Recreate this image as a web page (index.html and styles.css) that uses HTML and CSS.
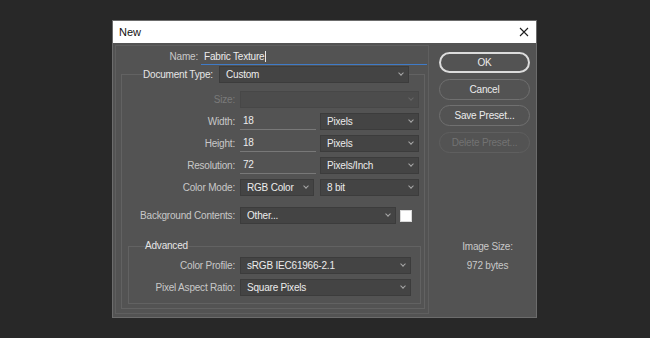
FILE: index.html
```html
<!DOCTYPE html>
<html lang="en">

<head>
    <meta charset="UTF-8">
    <title>New</title>
    <link rel="stylesheet" href="styles.css">
</head>

<body>
    <div class="dialog">
        <div class="titlebar">
            <span class="title">New</span>
            <svg class="close" width="10" height="10" viewBox="0 0 10 10">
                <path d="M1 1L9 9M9 1L1 9" stroke="#1e1e1e" stroke-width="1.1" fill="none" />
            </svg>
        </div>

        <div class="content">
            <div class="panel">
                <div class="name-row">
                    <span class="name-label">Name:</span>
                    <div class="name-input">Fabric Texture<span class="caret"></span></div>
                </div>

                <fieldset class="group">
                    <legend class="group-head">
                        <span class="head-label">Document Type:</span>
                        <div class="select select-doc">Custom</div>
                    </legend>

                    <div class="row">
                        <span class="label disabled">Size:</span>
                        <div class="select select-size is-disabled"></div>
                    </div>
                    <div class="row">
                        <span class="label">Width:</span>
                        <div class="field">18</div>
                        <div class="select select-unit">Pixels</div>
                    </div>
                    <div class="row">
                        <span class="label">Height:</span>
                        <div class="field">18</div>
                        <div class="select select-unit">Pixels</div>
                    </div>
                    <div class="row">
                        <span class="label">Resolution:</span>
                        <div class="field">72</div>
                        <div class="select select-unit">Pixels/Inch</div>
                    </div>
                    <div class="row">
                        <span class="label">Color Mode:</span>
                        <div class="select select-mode">RGB Color</div>
                        <div class="select select-unit">8 bit</div>
                    </div>
                    <div class="row row-bg">
                        <span class="label">Background Contents:</span>
                        <div class="select select-bg">Other...</div>
                        <div class="swatch"></div>
                    </div>

                    <fieldset class="advanced">
                        <legend class="adv-head">Advanced</legend>
                        <div class="row">
                            <span class="label label-adv">Color Profile:</span>
                            <div class="select select-adv">sRGB IEC61966-2.1</div>
                        </div>
                        <div class="row">
                            <span class="label label-adv">Pixel Aspect Ratio:</span>
                            <div class="select select-adv">Square Pixels</div>
                        </div>
                    </fieldset>
                </fieldset>
            </div>

            <div class="side">
                <button class="btn btn-default">OK</button>
                <button class="btn">Cancel</button>
                <button class="btn">Save Preset...</button>
                <button class="btn btn-disabled">Delete Preset...</button>

                <div class="image-size">
                    <p>Image Size:</p>
                    <p>972 bytes</p>
                </div>
            </div>
        </div>
    </div>
</body>

</html>
```

FILE: styles.css
```css
body {
    margin: 0;
    background-color: #282828;
    font-family: "Liberation Sans", Arial, sans-serif;
    font-size: 10px;
    letter-spacing: -0.2px;
}

.dialog {
    width: 425px;
    height: 298px;
    margin: 20px 0 0 112px;
    box-sizing: border-box;
    border: 1px solid #6c6c6c;
    background-color: #535353;
}

.titlebar {
    height: 22px;
    display: flex;
    align-items: center;
    justify-content: space-between;
    padding: 0 7px 0 6px;
    background-color: #fff;
}

.title {
    font-size: 11px;
    letter-spacing: 0;
    color: #111;
}

.content {
    display: flex;
    padding: 2px 0 0 2px;
}

.panel {
    width: 314px;
    height: 269px;
    box-sizing: border-box;
    border: 1px solid #5f5f5f;
    padding-top: 3px;
}

.name-row {
    display: flex;
    height: 17px;
}

.name-label {
    width: 82px;
    text-align: right;
    line-height: 16px;
    color: #c8c8c8;
}

.name-input {
    width: 226px;
    height: 16px;
    margin-left: 3px;
    padding-left: 3px;
    box-sizing: border-box;
    border-bottom: 1px solid #3f7bc8;
    line-height: 15px;
    color: #ececec;
}

.caret {
    display: inline-block;
    width: 1px;
    height: 11px;
    margin-left: 1px;
    vertical-align: -2px;
    background-color: #e8e8e8;
}

.group {
    width: 304px;
    margin: 0 0 0 5px;
    padding: 8px 0 4px 0;
    box-sizing: border-box;
    border: 1px solid #626262;
    min-width: 0;
}

.group-head {
    display: flex;
    align-items: center;
    margin-left: 21px;
    padding: 0;
    white-space: nowrap;
}

.head-label {
    width: 72px;
    color: #e6e6e6;
}

.row {
    display: flex;
    align-items: center;
    height: 17px;
    margin-bottom: 5px;
    white-space: nowrap;
}

.row-bg {
    margin-top: 11px;
    margin-bottom: 0;
}

.label {
    width: 113px;
    margin-right: 5px;
    text-align: right;
    color: #c8c8c8;
}

.label.disabled {
    color: #7a7a7a;
}

.label-adv {
    width: 106px;
}

.select {
    display: flex;
    align-items: center;
    height: 17px;
    padding: 0 4px 0 6px;
    box-sizing: border-box;
    background-color: #444;
    border: 1px solid #3c3c3c;
    color: #ececec;
}

.select::after {
    content: "";
    width: 3px;
    height: 3px;
    margin: -3px 1px 0 auto;
    border-right: 1px solid #a8a8a8;
    border-bottom: 1px solid #a8a8a8;
    transform: rotate(45deg);
}

.select-doc {
    width: 190px;
    margin-left: 4px;
}

.select-size {
    width: 179px;
}

.select.is-disabled {
    background-color: #4c4c4c;
    border-color: #474747;
}

.select.is-disabled::after {
    border-color: #666;
}

.field {
    width: 76px;
    height: 17px;
    margin-right: 4px;
    padding-left: 3px;
    box-sizing: border-box;
    border-bottom: 1px solid #787878;
    line-height: 16px;
    color: #ececec;
}

.select-unit {
    width: 99px;
}

.select-mode {
    width: 74px;
    margin-right: 6px;
}

.select-bg {
    width: 156px;
}

.swatch {
    width: 12px;
    height: 12px;
    margin-left: 4px;
    box-sizing: border-box;
    background-color: #fff;
    border: 1px solid #d8d8d8;
}

.advanced {
    width: 293px;
    margin: 15px 0 0 6px;
    padding: 4px 0 2px 0;
    box-sizing: border-box;
    border: 1px solid #626262;
    min-width: 0;
}

.adv-head {
    margin-left: 16px;
    padding: 0;
    line-height: 14px;
    color: #e6e6e6;
}

.select-adv {
    width: 171px;
}

.side {
    width: 107px;
    padding: 7px 0 0 10px;
    box-sizing: border-box;
    display: flex;
    flex-direction: column;
}

.btn {
    width: 91px;
    height: 21px;
    margin-bottom: 5.5px;
    padding: 0;
    border: 1px solid #707070;
    border-radius: 11px;
    background-color: #535353;
    font-family: inherit;
    font-size: 10px;
    letter-spacing: -0.2px;
    color: #ececec;
}

.btn-default {
    border: 2px solid #dcdcdc;
}

.btn-disabled {
    border-color: #5f5f5f;
    color: #727272;
}

.image-size {
    margin-top: 82px;
    text-align: center;
    color: #c8c8c8;
}

.image-size p {
    margin: 0 0 5px;
    line-height: 14px;
}
```
